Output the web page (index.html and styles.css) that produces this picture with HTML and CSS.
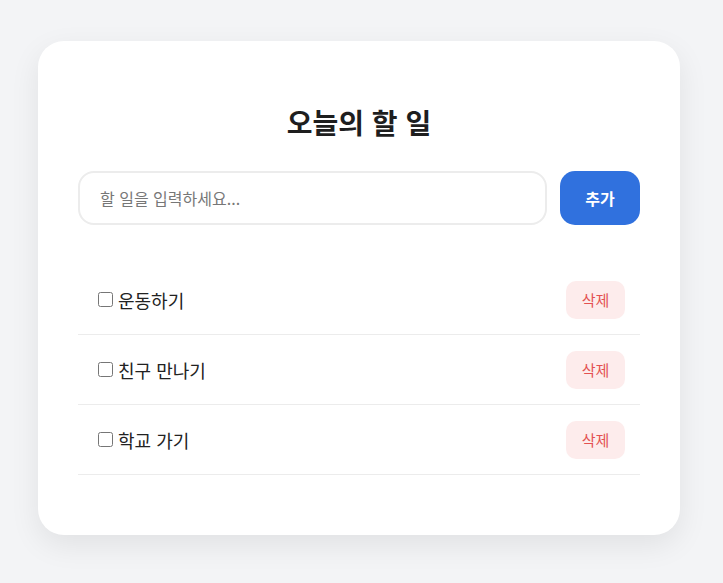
FILE: index.html
```html
<!DOCTYPE html>
<html lang="ko">
<head>
<meta charset="utf-8">
<link rel="stylesheet" href="styles.css">
</head>
<body>
<div class="card">
  <h1 class="title">오늘의 할 일</h1>
  <div class="add-row">
    <input class="todo-input" type="text" placeholder="할 일을 입력하세요...">
    <button class="add-btn">추가</button>
  </div>
  <ul class="todo-list">
    <li class="todo-item">
      <label class="todo-label"><input type="checkbox" class="todo-check">운동하기</label>
      <button class="del-btn">삭제</button>
    </li>
    <li class="todo-item">
      <label class="todo-label"><input type="checkbox" class="todo-check">친구 만나기</label>
      <button class="del-btn">삭제</button>
    </li>
    <li class="todo-item">
      <label class="todo-label"><input type="checkbox" class="todo-check">학교 가기</label>
      <button class="del-btn">삭제</button>
    </li>
  </ul>
</div>
</body>
</html>
```
FILE: styles.css
```css
html, body {
  margin: 0;
  padding: 0;
}
body {
  background: #f3f4f6;
  font-family: "Noto Sans CJK KR", "Noto Sans", sans-serif;
  color: #222;
  padding: 41px 43px 48px 38px;
}
.card {
  width: 642px;
  height: 494px;
  box-sizing: border-box;
  background: #fff;
  border-radius: 26px;
  box-shadow: 0 10px 30px rgba(0, 0, 0, 0.08);
  padding: 40px 40px;
}
.title {
  margin: 22px 0 30px;
  text-align: center;
  font-size: 28px;
  font-weight: 700;
  line-height: 38px;
  color: #1e1e1e;
}
.add-row {
  display: flex;
  gap: 13px;
  height: 54px;
}
.todo-input {
  flex: 1;
  box-sizing: border-box;
  height: 54px;
  border: 2px solid #ececec;
  border-radius: 16px;
  padding: 0 20px;
  font-family: inherit;
  font-size: 16px;
  color: #222;
  outline: none;
}
.todo-input::placeholder {
  color: #777;
}
.add-btn {
  width: 80px;
  height: 54px;
  border: none;
  border-radius: 15px;
  background: #3071de;
  color: #fff;
  font-family: inherit;
  font-size: 16px;
  font-weight: 700;
}
.todo-list {
  list-style: none;
  margin: 40px 0 0;
  padding: 0;
}
.todo-item {
  display: flex;
  align-items: center;
  justify-content: space-between;
  height: 70px;
  box-sizing: border-box;
  padding: 0 15px 0 16px;
  border-bottom: 1px solid #ececec;
}
.todo-label {
  display: flex;
  align-items: center;
  font-size: 18px;
  color: #222;
}
.todo-check {
  width: 15px;
  height: 15px;
  margin: 0 5px 0 4px;
}
.del-btn {
  width: 59px;
  height: 38px;
  border: none;
  border-radius: 10px;
  background: #fdecec;
  color: #e35151;
  font-family: inherit;
  font-size: 15px;
}
```
